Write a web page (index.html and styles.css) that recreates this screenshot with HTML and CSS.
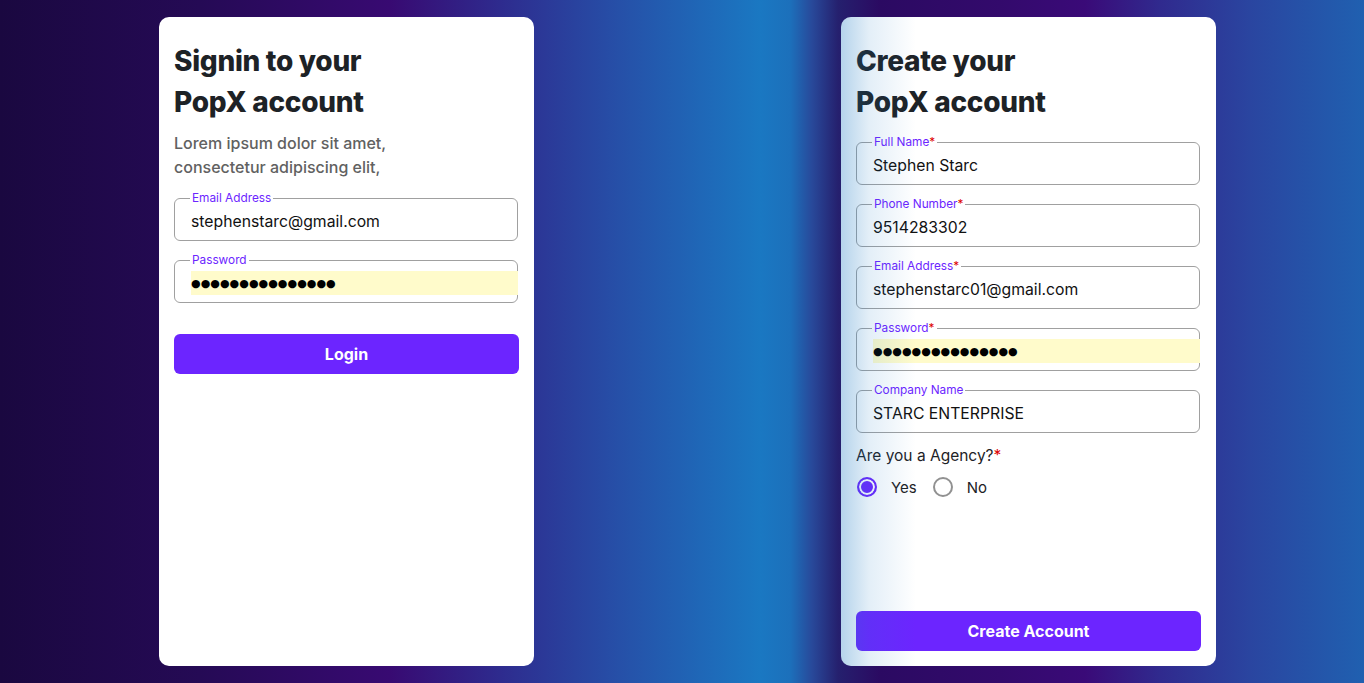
FILE: index.html
```html
<!DOCTYPE html>
<html lang="en">
<head>
<meta charset="utf-8">
<title>PopX</title>
<link rel="stylesheet" href="styles.css">
</head>
<body>
<main class="page">
  <section class="col">
    <div class="card">
      <h1 class="title">Signin to your<br>PopX account</h1>
      <p class="sub">Lorem ipsum dolor sit amet,<br>consectetur adipiscing elit,</p>
      <form class="form">
        <fieldset class="field">
          <legend>Email Address</legend>
          <input class="inp" type="text" value="stephenstarc@gmail.com">
        </fieldset>
        <fieldset class="field">
          <legend>Password</legend>
          <input class="inp autofill" type="text" value="●●●●●●●●●●●●●●●" aria-label="Password">
        </fieldset>
        <button type="button" class="btn login">Login</button>
      </form>
    </div>
  </section>
  <section class="col">
    <div class="card card-r">
      <h1 class="title">Create your<br>PopX account</h1>
      <form class="form form-r">
        <fieldset class="field">
          <legend>Full Name<span class="req">*</span></legend>
          <input class="inp" type="text" value="Stephen Starc">
        </fieldset>
        <fieldset class="field">
          <legend>Phone Number<span class="req">*</span></legend>
          <input class="inp" type="text" value="9514283302">
        </fieldset>
        <fieldset class="field">
          <legend>Email Address<span class="req">*</span></legend>
          <input class="inp" type="text" value="stephenstarc01@gmail.com">
        </fieldset>
        <fieldset class="field">
          <legend>Password<span class="req">*</span></legend>
          <input class="inp autofill" type="text" value="●●●●●●●●●●●●●●●" aria-label="Password">
        </fieldset>
        <fieldset class="field">
          <legend>Company Name</legend>
          <input class="inp" type="text" value="STARC ENTERPRISE">
        </fieldset>
        <div class="question">Are you a Agency?<span class="req">*</span></div>
        <div class="radios">
          <label class="opt"><input type="radio" name="agency" class="radio" checked>Yes</label>
          <label class="opt"><input type="radio" name="agency" class="radio">No</label>
        </div>
        <button type="button" class="btn create">Create Account</button>
      </form>
    </div>
  </section>
</main>
</body>
</html>
```

FILE: styles.css
```css
* { box-sizing: border-box; }
html, body { margin: 0; padding: 0; height: 100%; }
body {
  font-family: "Inter", "Roboto", sans-serif;
  background: linear-gradient(to right,
    #1a0840 0px,
    #250a55 200px,
    #380a72 390px,
    #2e2b8e 500px,
    #2650a8 620px,
    #1a78c2 760px,
    #1c70bb 790px,
    #28499a 812px,
    #25206e 838px,
    #2b0a62 880px,
    #330a6c 1000px,
    #3a0a78 1085px,
    #302a8e 1160px,
    #2a45a0 1250px,
    #2060b0 1364px);
  overflow: hidden;
}
.page {
  display: grid;
  grid-template-columns: 1fr 1fr;
  height: 683px;
}
.col {
  display: flex;
  justify-content: center;
  align-items: center;
  padding-left: 11px;
}
.card {
  position: relative;
  width: 375px;
  height: 649px;
  background: #fff;
  border-radius: 10px;
  padding: 24px 16px 15px 15px;
  display: flex;
  flex-direction: column;
  overflow: hidden;
}
.card-r::after {
  content: "";
  position: absolute;
  left: 0; top: 0; bottom: 0;
  width: 80px;
  background: linear-gradient(to right, rgba(26,120,194,0.32), rgba(26,120,194,0.12) 28px, rgba(26,120,194,0) 75px);
  pointer-events: none;
}
.title {
  margin: 0;
  font-size: 28px;
  line-height: 41px;
  font-weight: 800;
  color: #1d2226;
  letter-spacing: -0.3px;
}
.sub {
  margin: 8px 0 0;
  font-size: 16px;
  line-height: 24px;
  font-weight: 500;
  color: #616161;
}
.form {
  display: flex;
  flex-direction: column;
  gap: 13px;
  margin-top: 13px;
  width: 344px;
}
.form-r { flex: 1; margin-top: 13px; }
.field {
  margin: 0;
  border: 1px solid #a0a0a0;
  border-radius: 6px;
  padding: 0 0 7px 15px;
  min-width: 0;
}
.field legend {
  padding: 0 2px;
  font-size: 11.8px;
  line-height: 13px;
  color: #6c25ff;
}
.req { color: #dd0000; }
.inp {
  display: block;
  width: 100%;
  height: 24px;
  margin: 4px 0 0 1px;
  padding: 0;
  border: 0;
  outline: none;
  background: transparent;
  font-family: "Inter", "Roboto", sans-serif;
  font-size: 15.75px;
  color: #111;
}
.autofill {
  background: #fffbcb;
  font-family: "DejaVu Sans", sans-serif;
  font-size: 11px;
  letter-spacing: 0.05px;
  color: #000;
}
.btn {
  height: 40px;
  border: 0;
  border-radius: 6px;
  background: #6c25ff;
  color: #fff;
  font-family: "Inter", "Roboto", sans-serif;
  font-size: 16px;
  font-weight: 700;
  width: 345px;
}
.login { margin-top: 18px; }
.create { margin-top: auto; }
.question {
  margin-top: -1px;
  font-size: 15.5px;
  line-height: 22px;
  color: #1d2226;
}
.radios {
  display: flex;
  gap: 15px;
  margin-top: -3px;
}
.opt {
  display: flex;
  align-items: center;
  gap: 14px;
  font-size: 15px;
  color: #1d2226;
}
.radio {
  appearance: none;
  -webkit-appearance: none;
  margin: 0 0 0 1px;
  width: 20px;
  height: 20px;
  border-radius: 50%;
  border: 2px solid #919191;
  background: #fff;
}
.radio:checked {
  border-color: #6c25ff;
  background: #6c25ff;
  box-shadow: inset 0 0 0 2px #fff;
}
```
